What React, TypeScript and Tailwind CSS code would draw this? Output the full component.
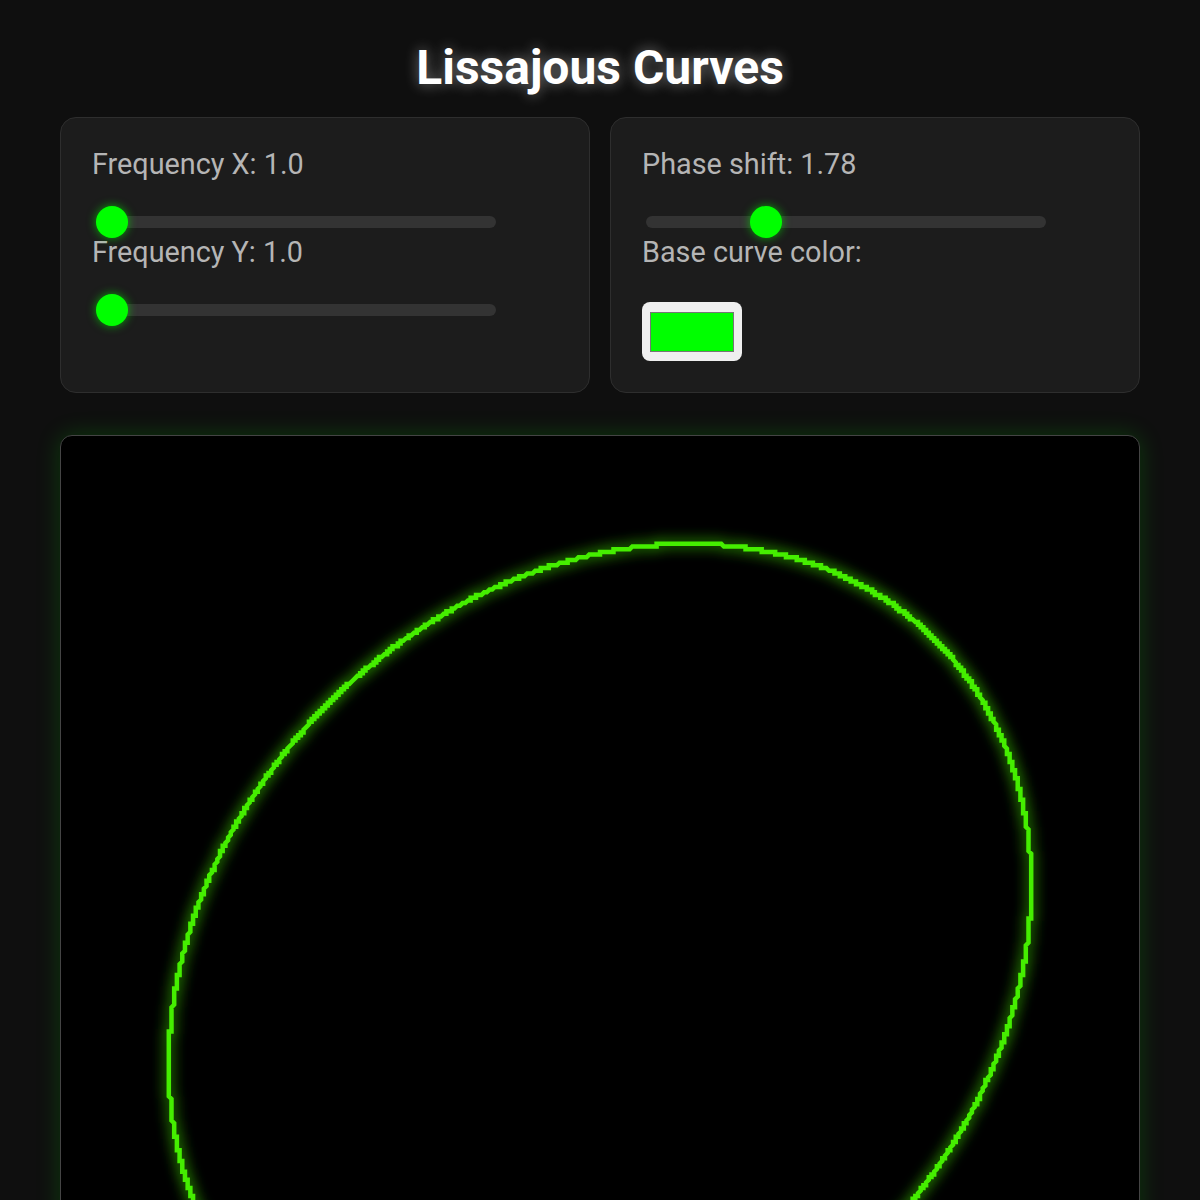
import { useMemo } from "react";

interface SliderProps {
  value: number;
  min: number;
  max: number;
}

// Static slider look: dark rounded track with a glowing green knob
function Slider({ value, min, max }: SliderProps) {
  const pct = (value - min) / (max - min);
  return (
    <div className="relative mt-[37px] mb-[9px] ml-1 h-3 w-[400px] rounded-full bg-[#333333]">
      <div
        className="absolute top-1/2 h-8 w-8 -translate-y-1/2 rounded-full bg-[#00ff00] shadow-[0_0_10px_rgba(0,255,0,0.6)]"
        style={{ left: `${pct * (400 - 32)}px` }}
      />
    </div>
  );
}

function Label({ children }: { children: React.ReactNode }) {
  return <div className="text-[28.8px] leading-[30px] text-[#b5b5b5]">{children}</div>;
}

const SIZE = 1080;
// the plot is drawn at a coarse resolution and blown up, so points snap to a grid
const CELL = SIZE / 400;

function Curve({ fx, fy, phase, color }: { fx: number; fy: number; phase: number; color: string }) {
  const d = useMemo(() => {
    const a = SIZE * 0.4;
    const c = SIZE / 2;
    const pts: string[] = [];
    const steps = 3000;
    let last = "";
    for (let i = 0; i <= steps; i++) {
      const t = (i / steps) * Math.PI * 2;
      const x = Math.round((c + a * Math.sin(fx * t + phase)) / CELL) * CELL;
      const y = Math.round((c + a * Math.sin(fy * t)) / CELL) * CELL;
      const p = `${x.toFixed(1)},${y.toFixed(1)}`;
      if (p !== last) pts.push(p);
      last = p;
    }
    return "M" + pts.join("L") + "Z";
  }, [fx, fy, phase]);

  return (
    <svg viewBox={`0 0 ${SIZE} ${SIZE}`} className="block h-full w-full">
      <defs>
        <filter id="glow" x="-20%" y="-20%" width="140%" height="140%">
          <feGaussianBlur stdDeviation="7" result="blur" />
          <feMerge>
            <feMergeNode in="blur" />
            <feMergeNode in="SourceGraphic" />
          </feMerge>
        </filter>
      </defs>
      <path d={d} fill="none" stroke={color} strokeWidth={4.5} strokeLinejoin="miter" filter="url(#glow)" />
    </svg>
  );
}

export default function App() {
  const fx = 1.0;
  const fy = 1.0;
  const phase = 1.78;

  return (
    <div className="min-h-screen bg-[#0f0f0f] pt-[42px] font-['Roboto',sans-serif]">
      <div className="mx-auto w-[1080px]">
        <h1 className="mb-[23px] text-center text-[48px] font-bold leading-[52px] text-white [text-shadow:0_0_14px_rgba(255,255,255,0.45)]">
          Lissajous Curves
        </h1>

        <div className="grid grid-cols-2 gap-5">
          <div className="rounded-2xl border border-[#2e2e2e] bg-[#1c1c1c] p-[31px]">
            <Label>Frequency X: {fx.toFixed(1)}</Label>
            <Slider value={fx} min={1} max={10} />
            <Label>Frequency Y: {fy.toFixed(1)}</Label>
            <Slider value={fy} min={1} max={10} />
          </div>

          <div className="rounded-2xl border border-[#2e2e2e] bg-[#1c1c1c] p-[31px]">
            <Label>Phase shift: {phase.toFixed(2)}</Label>
            <Slider value={phase} min={0} max={Math.PI * 2} />
            <Label>Base curve color:</Label>
            <div className="mt-[35px] flex h-[59px] w-[100px] items-center justify-center rounded-lg bg-[#efefef]">
              <div className="h-[40px] w-[84px] border border-[#767676] bg-[#00ff00]" />
            </div>
          </div>
        </div>

        <div className="mt-[42px] h-[1080px] w-[1080px] overflow-hidden rounded-xl border border-[#444444] bg-black shadow-[0_0_24px_rgba(0,255,0,0.18)]">
          <Curve fx={fx} fy={fy} phase={phase} color="#44ee00" />
        </div>
      </div>
    </div>
  );
}
